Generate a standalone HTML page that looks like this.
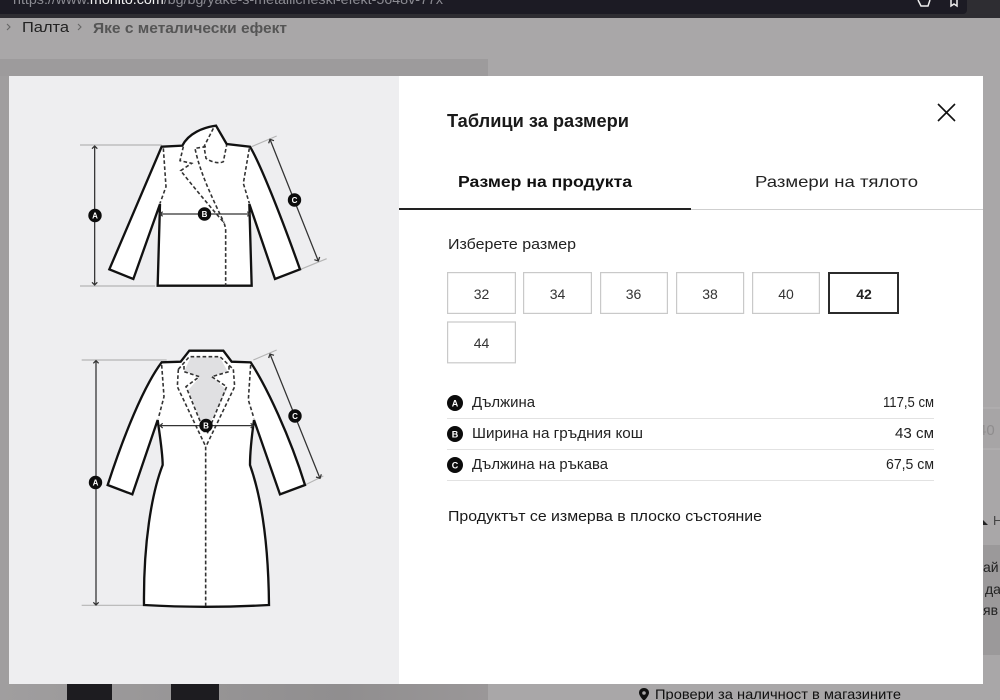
<!DOCTYPE html>
<html lang="bg">
<head>
<meta charset="utf-8">
<title>Таблици за размери</title>
<style>
html,body{margin:0;padding:0;width:1000px;height:700px;overflow:hidden;background:#a9a7a8}
svg{display:block;position:absolute;left:0;top:0}
text{font-family:"Liberation Sans",sans-serif}
</style>
</head>
<body>
<svg width="1000" height="700" viewBox="0 0 1000 700" xmlns="http://www.w3.org/2000/svg">
<defs>
<linearGradient id="photo" x1="0" y1="0" x2="1" y2="0"><stop offset="0" stop-color="#a09e9f"/><stop offset=".7" stop-color="#908e8f"/><stop offset="1" stop-color="#9a9798"/></linearGradient>
</defs>
<!-- page behind -->
<rect width="1000" height="700" fill="#a9a7a8"/>
<rect x="0" y="0" width="1000" height="18" fill="#2e2d32"/>
<rect x="-10" y="-10" width="977" height="24" rx="4" fill="#1c1b24"/>
<text x="13" y="4" font-size="14" fill="#8b8b92" textLength="430" lengthAdjust="spacingAndGlyphs">https://www.<tspan fill="#f2f2f2">mohito.com</tspan>/bg/bg/yake-s-metallicheski-efekt-5648v-77x</text>
<path d="M918 0l3 6h7l2-6M951 0v6l3-2 3 2 0-6" fill="none" stroke="#eee" stroke-width="1.5"/>
<path d="M7 24l3 3-3 3M78 24l3 3-3 3" fill="none" stroke="#666" stroke-width="1.1"/>
<text x="22" y="32" font-size="15" fill="#222" textLength="47" lengthAdjust="spacingAndGlyphs">Палта</text>
<text x="93" y="33" font-size="15" font-weight="700" fill="#555" textLength="194" lengthAdjust="spacingAndGlyphs">Яке с металически ефект</text>
<rect x="0" y="59" width="488" height="17" fill="#9d9b9c"/>
<rect x="0" y="76" width="488" height="624" fill="url(#photo)"/>
<rect x="67" y="680" width="45" height="20" fill="#1d1c20"/>
<rect x="171" y="680" width="48" height="20" fill="#1d1c20"/>
<rect x="975" y="408" width="30" height="41" fill="#a7a5a6" stroke="#b5b3b4"/>
<text x="978" y="435" font-size="15" fill="#8f8d8e">40</text>
<path d="M983 520l5 5h-5z" fill="#222"/>
<text x="993" y="525" font-size="13" fill="#444">Н</text>
<rect x="983" y="545" width="17" height="110" fill="#9b999a"/>
<text x="983" y="572" font-size="14" fill="#222">ай</text>
<text x="985" y="594" font-size="14" fill="#222">да</text>
<text x="983" y="615" font-size="14" fill="#222">яв</text>
<path d="M644 688c-3.200 0-5 2.300-5 4.800 0 3.200 5 8.200 5 8.200s5-5 5-8.200c0-2.500-1.800-4.800-5-4.800z" fill="#111"/>
<circle cx="644" cy="693" r="1.800" fill="#a9a7a8"/>
<text x="655" y="699" font-size="14" fill="#111" textLength="246" lengthAdjust="spacingAndGlyphs">Провери за наличност в магазините</text>

<!-- modal -->
<rect x="9" y="76" width="974" height="608" fill="#fff"/>
<rect x="9" y="76" width="390" height="608" fill="#eeeef0"/>

<!-- jacket -->
<g transform="translate(60 100) scale(.33333)" fill="none" stroke-linejoin="miter">
<path d="M60 135H305M60 558H285M575 140L650 108M722 508L800 476" stroke="#b5b5b5" stroke-width="3.500"/>
<path d="M305 140L367 137C385 100 430 82 468 77L500 132L570 140C600 190 660 340 720 508L645 537L568 312L575 557H293L300 312L220 537L148 508Z" fill="#fff" stroke="#111" stroke-width="7"/>
<g stroke="#333" stroke-width="4.800" stroke-dasharray="11 7">
<path d="M310 145L318 260L300 310M568 145L550 250L568 310"/>
<path d="M460 85L432 140L438 175C460 190 480 190 490 185L500 135"/>
<path d="M370 140L360 182L395 190L362 212C400 260 450 320 492 368L497 385V557"/>
<path d="M438 140L405 145C420 220 460 300 492 368"/>
</g>
<g stroke="#333" stroke-width="3.800">
<path d="M104 138V555M96 146L104 138L112 146M96 547L104 555L112 547"/>
<path d="M300 342H570M308 335L300 342L308 349M562 335L570 342L562 349"/>
<path d="M630 118L775 483M626 130L630 118L642 122M763 479L775 483L779 471"/>
</g>
</g>
<g font-size="8" font-weight="700" fill="#fff" text-anchor="middle">
<circle cx="95" cy="215.500" r="6.700" fill="#0c0c0c"/><text x="95" y="218.500">A</text>
<circle cx="204.500" cy="214" r="6.700" fill="#0c0c0c"/><text x="204.500" y="217">B</text>
<circle cx="294.500" cy="200" r="6.700" fill="#0c0c0c"/><text x="294.500" y="203">C</text>
</g>

<!-- coat -->
<g transform="translate(60 330) scale(.33333)" fill="none" stroke-linejoin="miter">
<path d="M65 90H320M65 826H250M580 90L650 60M735 465L790 438" stroke="#b5b5b5" stroke-width="3.500"/>
<path d="M305 97L362 95L388 62H490L515 95L572 97C620 170 690 320 735 465L660 493L582 270C575 320 570 370 570 405C600 490 625 620 627 825C500 832 370 832 252 825C250 640 275 490 308 405C308 370 300 320 293 270L217 493L143 465C190 320 250 170 305 97Z" fill="#fff" stroke="#111" stroke-width="7"/>
<path d="M392 82H480L503 125L455 140L500 180L455 270H420L385 180L420 140L372 125Z" fill="#e0e0e2"/>
<g stroke="#333" stroke-width="4.800" stroke-dasharray="11 7">
<path d="M305 105L312 200L295 265M572 105L565 210L582 265"/>
<path d="M355 118L388 80H480L520 118"/>
<path d="M372 108V125L418 140L378 170L435 310"/>
<path d="M507 108V125L455 140L500 170L442 310"/>
<path d="M355 118L352 170L435 345M520 118L524 170L440 345"/>
<path d="M437 350V828"/>
</g>
<g stroke="#333" stroke-width="3.800">
<path d="M108 92V825M100 100L108 92L116 100M100 817L108 825L116 817"/>
<path d="M300 287H580M308 280L300 287L308 294M572 280L580 287L572 294"/>
<path d="M630 72L780 445M626 84L630 72L642 76M768 441L780 445L784 433"/>
</g>
</g>
<g font-size="8" font-weight="700" fill="#fff" text-anchor="middle">
<circle cx="95.500" cy="482.500" r="6.700" fill="#0c0c0c"/><text x="95.500" y="485.500">A</text>
<circle cx="206" cy="425.500" r="6.700" fill="#0c0c0c"/><text x="206" y="428.500">B</text>
<circle cx="295" cy="416" r="6.700" fill="#0c0c0c"/><text x="295" y="419">C</text>
</g>

<!-- right panel -->
<path d="M938 104L955 121M955 104L938 121" stroke="#111" stroke-width="1.600" fill="none"/>
<text x="447" y="127" font-size="18" font-weight="700" fill="#1a1a1a" textLength="182" lengthAdjust="spacingAndGlyphs">Таблици за размери</text>
<text x="458" y="187" font-size="16" font-weight="700" fill="#111" textLength="174" lengthAdjust="spacingAndGlyphs">Размер на продукта</text>
<text x="755" y="187" font-size="16" fill="#222" textLength="163" lengthAdjust="spacingAndGlyphs">Размери на тялото</text>
<rect x="690" y="209" width="293" height="1" fill="#cfcfcf"/>
<rect x="399" y="208" width="292" height="2" fill="#222"/>
<text x="448" y="249" font-size="14.500" fill="#222" textLength="128" lengthAdjust="spacingAndGlyphs">Изберете размер</text>

<g fill="#fff" stroke="#c9c9c9" stroke-width="1.200">
<rect x="447.600" y="272.600" width="67.800" height="40.800"/>
<rect x="523.600" y="272.600" width="67.800" height="40.800"/>
<rect x="600.600" y="272.600" width="66.800" height="40.800"/>
<rect x="676.600" y="272.600" width="67" height="40.800"/>
<rect x="752.600" y="272.600" width="66.800" height="40.800"/>
<rect x="447.600" y="322" width="67.800" height="40.800"/>
</g>
<rect x="829" y="273" width="69" height="40" fill="#fff" stroke="#2b2b2b" stroke-width="2"/>
<g font-size="14" fill="#333" text-anchor="middle">
<text x="481.500" y="299">32</text>
<text x="557.500" y="299">34</text>
<text x="633.500" y="299">36</text>
<text x="710" y="299">38</text>
<text x="786" y="299">40</text>
<text x="864" y="299" font-weight="700" fill="#222">42</text>
<text x="481.500" y="348">44</text>
</g>

<g fill="#0b0b0b">
<circle cx="455" cy="403" r="8"/><circle cx="455" cy="434" r="8"/><circle cx="455" cy="465" r="8"/>
</g>
<g font-size="9" font-weight="700" fill="#fff" text-anchor="middle">
<text x="455" y="406.500">A</text><text x="455" y="437.500">B</text><text x="455" y="468.500">C</text>
</g>
<g fill="#222" font-size="14.500">
<text x="472" y="407" textLength="63" lengthAdjust="spacingAndGlyphs">Дължина</text>
<text x="472" y="438" textLength="171" lengthAdjust="spacingAndGlyphs">Ширина на гръдния кош</text>
<text x="472" y="469" textLength="136" lengthAdjust="spacingAndGlyphs">Дължина на ръкава</text>
<text x="883" y="407" textLength="51" lengthAdjust="spacingAndGlyphs">117,5 см</text>
<text x="895" y="438" textLength="39" lengthAdjust="spacingAndGlyphs">43 см</text>
<text x="886" y="469" textLength="48" lengthAdjust="spacingAndGlyphs">67,5 см</text>
</g>
<g fill="#e2e2e2">
<rect x="447" y="418" width="487" height="1"/>
<rect x="447" y="449" width="487" height="1"/>
<rect x="447" y="480" width="487" height="1"/>
</g>
<text x="448" y="521" font-size="15" fill="#1a1a1a" textLength="314" lengthAdjust="spacingAndGlyphs">Продуктът се измерва в плоско състояние</text>
</svg>
</body>
</html>
